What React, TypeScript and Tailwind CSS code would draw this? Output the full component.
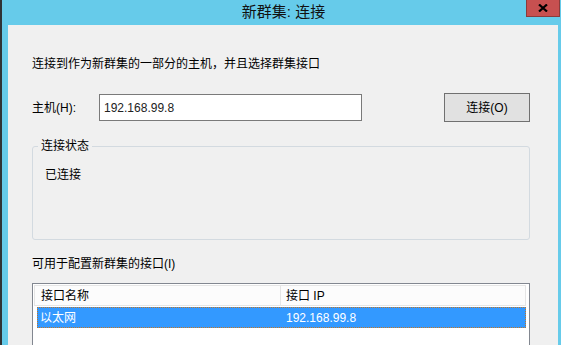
export default function App() {
  const font = "font-['Liberation_Sans','Noto_Sans_CJK_SC',sans-serif]";

  return (
    <div
      className={`w-[561px] h-[345px] overflow-hidden bg-[#66CBEA] border-l-2 border-[#2f3336] flex flex-col ${font} text-[12px] leading-[16px] text-black`}
    >
      {/* Title bar */}
      <div className="relative h-[25px] shrink-0 flex items-start justify-center">
        <span className="mt-[3px] ml-[4px] text-[15px] leading-[18px] text-[#111]">
          新群集: 连接
        </span>
        <div className="absolute top-0 right-[1px] w-[34px] h-[17px] bg-[#C75050] border border-t-0 border-[#8a3b3b] flex items-center justify-center">
          <svg width="10" height="8" viewBox="0 0 10 8">
            <path d="M1 0.5 L9 7.5 M9 0.5 L1 7.5" stroke="#000" strokeWidth="2.2" />
          </svg>
        </div>
      </div>

      {/* Body */}
      <div className="flex-1 ml-[6px] mr-[3px] bg-[#F0F0F0] pl-[24px] pr-[28px] flex flex-col">
        <p className="mt-[31px]">连接到作为新群集的一部分的主机，并且选择群集接口</p>

        {/* Host row */}
        <div className="mt-[21px] flex items-center h-[29px]">
          <span className="w-[67px]">主机(H):</span>
          <div className="w-[263px] h-[27px] bg-white border border-[#7A7A7A] flex items-center pl-[4px] text-[#222]">
            192.168.99.8
          </div>
          <div className="ml-auto w-[86px] h-[29px] bg-[#E1E1E1] border border-[#707070] flex items-center justify-center">
            连接(O)
          </div>
        </div>

        {/* Connection status group */}
        <fieldset className="mt-[16px] h-[102px] border border-[#D3DAE0] rounded-[3px] px-0 pb-0">
          <legend className="ml-[5px] px-[3px] leading-[16px]">连接状态</legend>
          <p className="mt-[13px] pl-[12px]">已连接</p>
        </fieldset>

        <p className="mt-[16px]">可用于配置新群集的接口(I)</p>

        {/* Interface list */}
        <div className="mt-[11px] flex-1 bg-white border border-[#828790] border-b-0 p-[1px] pr-[3px] flex flex-col">
          <div className="h-[21px] flex border border-[#E5E5E5] bg-[#FCFCFC]">
            <div className="w-[246px] border-r border-[#E5E5E5] pl-[6px] flex items-center">
              接口名称
            </div>
            <div className="flex-1 pl-[5px] flex items-center">接口 IP</div>
          </div>
          <div className="ml-[3px] mt-[1px] h-[21px] flex bg-[#3399FF] text-white border border-dotted border-[#C0762A]">
            <div className="w-[242px] pl-[2px] flex items-center">以太网</div>
            <div className="flex-1 pl-[6px] flex items-center">192.168.99.8</div>
          </div>
        </div>
      </div>
    </div>
  );
}
